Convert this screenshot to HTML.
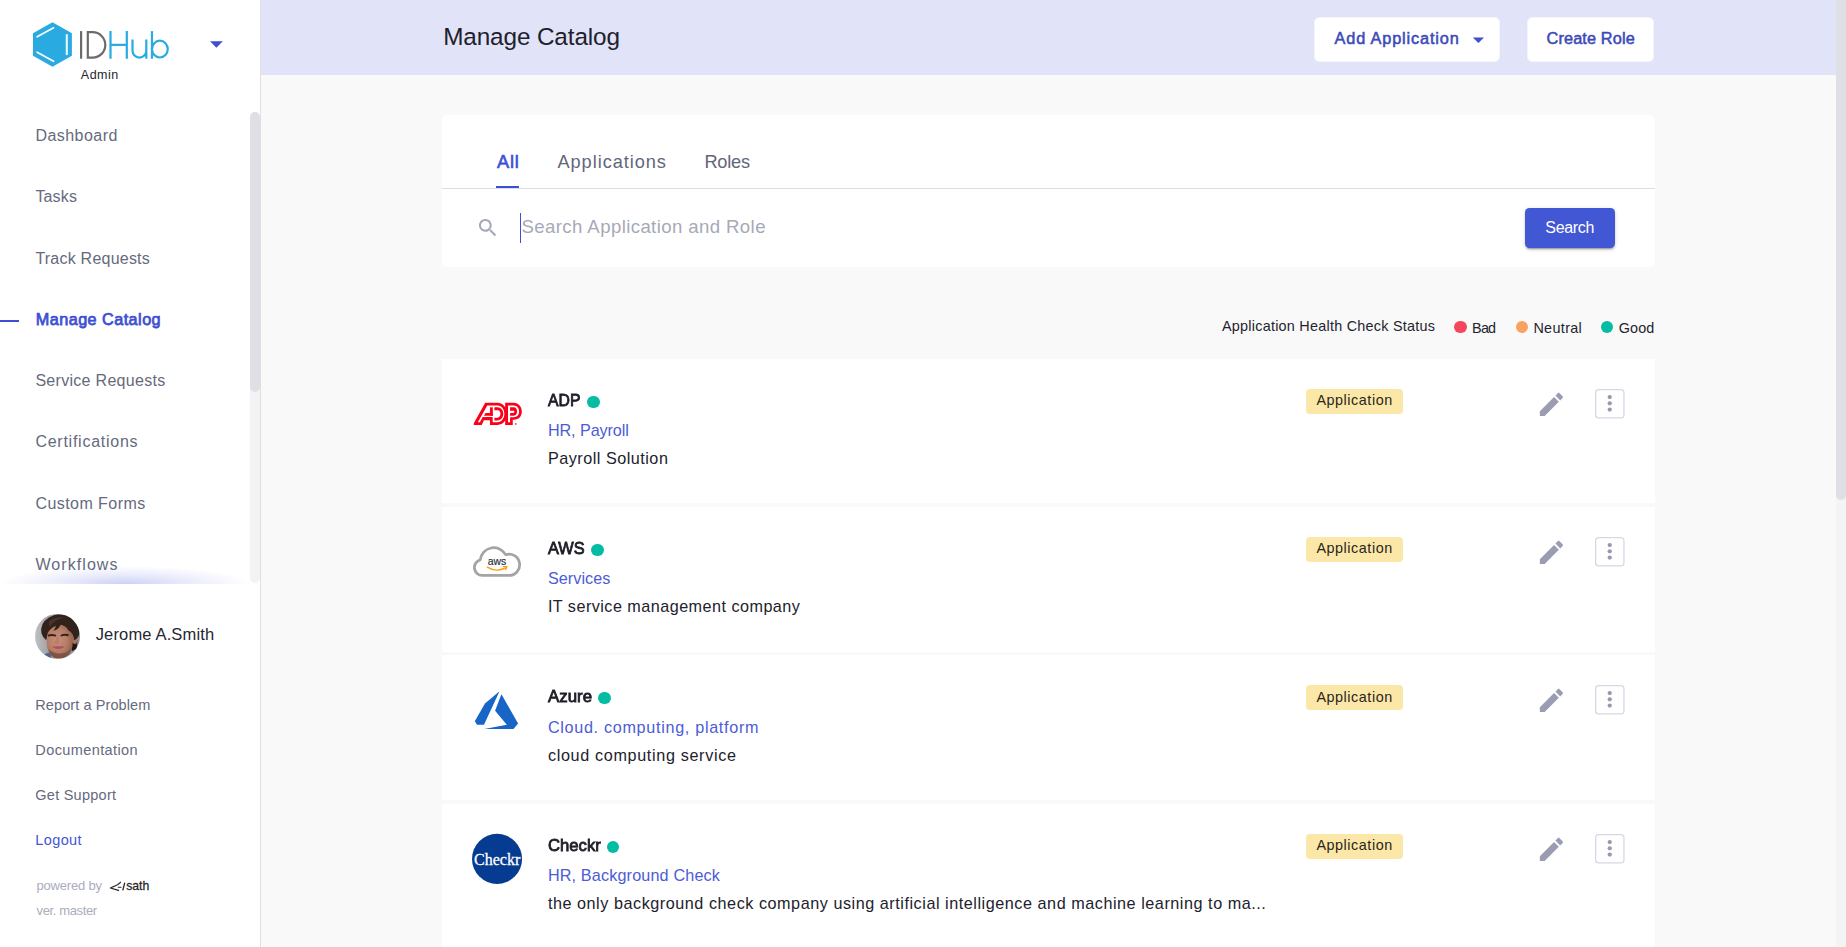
<!DOCTYPE html>
<html><head><meta charset="utf-8"><title>Manage Catalog</title>
<style>
html,body{margin:0;padding:0;overflow:hidden;}
body{width:1846px;height:947px;overflow:hidden;position:relative;background:#f9f9f9;font-family:"Liberation Sans",sans-serif;}
.a{position:absolute;}
.t{position:absolute;white-space:pre;}
#side{left:0;top:0;width:260px;height:947px;background:#fff;}
#sideborder{left:260px;top:0;width:1px;height:947px;background:#e0e0e2;}
#hdr{left:261px;top:0;width:1575px;height:75px;background:#e1e4f8;}
.btn{background:#fff;border:1px solid #f3f4fc;border-radius:5px;box-sizing:border-box;}
.card{background:#fff;}
.badge{background:#fbe8a9;border-radius:4px;width:97px;height:25px;left:1306px;}
.dot{width:12.4px;height:12.4px;border-radius:50%;}
.more{width:30px;height:30px;box-sizing:border-box;border:1.4px solid #d9dae6;border-radius:4px;left:1595px;background:#fff;}
.more i{position:absolute;left:11.4px;width:4.4px;height:4.4px;border-radius:50%;background:#9799b0;}
</style></head><body>

<!-- ===== sidebar ===== -->
<div id="side" class="a"></div>
<div id="sideborder" class="a"></div>
<!-- nav bottom glow -->
<div class="a" style="left:0;top:560px;width:250px;height:24px;overflow:hidden;">
  <div class="a" style="left:-5px;top:0;width:260px;height:48px;background:radial-gradient(ellipse 125px 18px at 50% 50%, rgba(120,130,230,0.37), rgba(120,130,230,0.16) 50%, rgba(120,130,230,0) 100%);"></div>
</div>
<!-- sidebar scrollbar -->
<div class="a" style="left:250px;top:112px;width:10px;height:471px;background:#f3f3f4;border-radius:5px;"></div>
<div class="a" style="left:250px;top:112px;width:10px;height:280px;background:#dfe0e6;border-radius:5px;"></div>
<!-- active marker -->
<div class="a" style="left:0;top:319.6px;width:19px;height:2.1px;background:#3d4fd3;"></div>
<!-- dropdown triangle -->
<svg class="a" style="left:209px;top:40px" width="15" height="9" viewBox="0 0 15 9"><path d="M1 1.2 L13.8 1.2 L7.4 7.8 Z" fill="#3f4fd0"/></svg>

<svg class="a" style="left:25px;top:15px" width="155" height="60" viewBox="25 15 155 60">
<polygon points="52.5,22.3 71.9,33.2 71.9,55.8 52.5,66.7 33.0,55.8 33.0,33.2" fill="#29abe2"/>
<g stroke="#fff" stroke-linecap="round" fill="none">
<line x1="37.1" y1="36.8" x2="53.6" y2="27.8" stroke-width="1.7"/>
<line x1="37.1" y1="52.2" x2="53.6" y2="61.3" stroke-width="1.7"/>
<line x1="66.8" y1="35.0" x2="66.8" y2="54.2" stroke-width="2.1" stroke-opacity="0.9"/>
</g>
<g fill="none" stroke-width="2.2" stroke="#6b6b6b">
<path d="M81.1 31.1V58.7"/>
<path d="M87.8 32.2H92.6A12.7 12.7 0 0 1 92.6 57.6H87.8Z"/>
</g>
<g fill="none" stroke-width="2.2" stroke="#29abe2">
<path d="M110.5 31.1V58.7M126.8 31.1V58.7M110.5 44.8H126.8"/>
<path d="M132.5 39.5V50.7a6.9 6.9 0 0 0 13.8 0V39.5M146.3 39.5V58.7"/>
<path d="M151.95 31.1V58.7"/><ellipse cx="159.85" cy="49.1" rx="7.9" ry="8.4"/>
</g></svg>
<svg class="a" style="left:30px;top:608px" width="56" height="56" viewBox="0 0 947 947">
<defs><clipPath id="avc"><circle cx="465" cy="480" r="380"/></clipPath>
<filter id="avb" x="-10%" y="-10%" width="120%" height="120%"><feGaussianBlur stdDeviation="9"/></filter>
<linearGradient id="avbg" x1="0" x2="1" y1="0" y2="0"><stop offset="0" stop-color="#c4c5c9"/><stop offset="0.3" stop-color="#a2a2a5"/><stop offset="1" stop-color="#8f8f92"/></linearGradient>
<radialGradient id="avsk" cx="0.42" cy="0.45" r="0.62"><stop offset="0" stop-color="#c9917b"/><stop offset="0.6" stop-color="#b57c66"/><stop offset="1" stop-color="#8e5b48"/></radialGradient></defs>
<g clip-path="url(#avc)"><g filter="url(#avb)">
<rect x="60" y="80" width="820" height="820" fill="url(#avbg)"/>
<path d="M225 790 L345 745 L370 900 L190 900Z" fill="#46678f"/>
<path d="M705 590 L800 540 L790 690 L705 730Z" fill="#1f1714"/>
<ellipse cx="758" cy="535" rx="40" ry="72" fill="#b0705a"/>
<path d="M275 420 Q280 300 500 290 Q700 300 725 430 L720 640 Q700 800 560 850 Q470 870 390 830 Q300 760 285 620 Z" fill="url(#avsk)"/>
<path d="M315 700 Q330 790 400 835 Q480 870 570 845 Q680 790 712 660 Q640 770 520 770 Q400 770 315 700Z" fill="#7d4f3f" opacity="0.85"/>
<path d="M195 430 Q160 260 320 160 Q470 70 640 125 Q830 200 835 430 Q815 520 745 545 Q740 420 650 375 Q600 300 520 285 Q480 370 400 385 Q430 330 440 300 Q340 340 300 420 Q285 480 275 545 Q215 500 195 430Z" fill="#30221d"/>
<path d="M330 210 Q450 130 600 170 Q500 170 420 230 Q360 270 330 330 Q310 270 330 210Z" fill="#4d392f" opacity="0.8"/>
<path d="M300 452 Q370 425 445 455 L440 482 Q370 462 305 482Z" fill="#33221c"/>
<path d="M515 455 Q580 425 655 445 L652 478 Q580 462 518 482Z" fill="#33221c"/>
<path d="M455 470 Q440 560 405 600 Q450 625 500 600 Q490 540 485 470Z" fill="#b87a64" opacity="0.8"/>
<path d="M375 652 Q470 640 580 650 Q560 685 470 692 Q400 688 375 652Z" fill="#a9535b"/>
</g></g></svg>
<svg class="a" style="left:100px;top:872px" width="60" height="28" viewBox="0 0 1846 861">
<g fill="none" stroke="#262626" stroke-linecap="round" stroke-linejoin="round">
<path d="M630 315 Q590 385 320 492 L570 568" stroke-width="40"/>
<path d="M560 470H650" stroke-width="32"/>
<path d="M758 340L705 548" stroke-width="40"/></g>
<text x="805" y="548" font-family="Liberation Sans, sans-serif" font-size="372" fill="#262626" stroke="#262626" stroke-width="8" textLength="710" lengthAdjust="spacingAndGlyphs">sath</text>
</svg>

<!-- ===== header ===== -->
<div id="hdr" class="a"></div>
<div class="a btn" style="left:1313.6px;top:16.6px;width:186.5px;height:45.6px;"></div>
<div class="a btn" style="left:1526.9px;top:16.6px;width:127.2px;height:45.6px;"></div>
<svg class="a" style="left:1472px;top:37px" width="13" height="7" viewBox="0 0 13 7"><path d="M0.8 0.5 L12 0.5 L6.4 6.1 Z" fill="#3f4fd0"/></svg>

<!-- ===== main scrollbar ===== -->
<div class="a" style="left:1836px;top:0;width:10px;height:947px;background:#f4f4f5;"></div>
<div class="a" style="left:1836px;top:-10px;width:10px;height:510px;background:#dfe0e6;border-radius:5px;"></div>

<!-- ===== tabs/search card ===== -->
<div class="a card" style="left:442px;top:115px;width:1213px;height:152px;border-radius:5px;"></div>
<div class="a" style="left:442px;top:188px;width:1213px;height:1.2px;background:#dcdde2;"></div>
<div class="a" style="left:496px;top:185.8px;width:23px;height:2.2px;background:#3d4fd3;"></div>
<svg class="a" style="left:476.2px;top:215.8px" width="23.6" height="23.6" viewBox="0 0 24 24"><path fill="#a4a8b8" d="M15.5 14h-.79l-.28-.27C15.41 12.59 16 11.11 16 9.5 16 5.91 13.09 3 9.5 3S3 5.91 3 9.5 5.91 16 9.5 16c1.61 0 3.09-.59 4.23-1.57l.27.28v.79l5 4.99L20.49 19l-4.99-5zm-6 0C7.01 14 5 11.99 5 9.5S7.01 5 9.5 5 14 7.01 14 9.5 11.99 14 9.5 14z"/></svg>
<div class="a" style="left:520px;top:213.2px;width:1.2px;height:29.6px;background:#3d4fd3;"></div>
<div class="a" style="left:1525px;top:207.8px;width:90px;height:40.2px;background:#4257d4;border-radius:4.5px;box-shadow:0 3px 1px -2px rgba(0,0,0,.2),0 2px 2px rgba(0,0,0,.14),0 1px 5px rgba(0,0,0,.12);"></div>

<!-- legend dots -->
<div class="a dot" style="left:1454.3px;top:320.7px;background:#f4475e;"></div>
<div class="a dot" style="left:1515.8px;top:320.7px;background:#f9a260;"></div>
<div class="a dot" style="left:1600.9px;top:320.7px;background:#04bca3;"></div>

<div class="a card" style="left:442px;top:359px;width:1213px;height:144px;"></div>
<div class="a badge" style="top:388.80px;"></div>
<div class="a" style="left:587.0px;top:395.80px;width:12.5px;height:12.5px;border-radius:50%;background:#04bca3;"></div>
<svg class="a" style="left:1535.95px;top:388.55px" width="30.8" height="30.8" viewBox="0 0 24 24"><path fill="#9a9db2" d="M3 17.25V21h3.75L17.81 9.94l-3.75-3.75L3 17.25zM20.71 7.04c.39-.39.39-1.02 0-1.41l-2.34-2.34c-.39-.39-1.02-.39-1.41 0l-1.83 1.83 3.75 3.75 1.83-1.83z"/></svg>
<svg class="a" style="left:1595.3px;top:389.20px" width="29.6" height="29.6" viewBox="0 0 29.6 29.6"><rect x="0.65" y="0.65" width="28.3" height="28.3" rx="3.2" fill="#fff" stroke="#d6d8e4" stroke-width="1.3"/><g fill="#9799b0"><circle cx="14.75" cy="8.05" r="2.15"/><circle cx="14.75" cy="14.3" r="2.15"/><circle cx="14.75" cy="20.6" r="2.15"/></g></svg>
<svg class="a" style="left:470px;top:398.00px" width="56" height="30" viewBox="0 0 1768 947">
<g fill="#fb0019">
<path d="M120 850 L120 800 L480 150 L870 150 C1050 150 1170 320 1170 500 C1170 690 1050 850 870 850 L630 850 L630 700 L440 700 L370 850 Z"/>
<path d="M1110 150 L1380 150 C1540 150 1635 290 1635 430 C1635 580 1540 690 1380 690 L1350 690 L1350 850 L1110 850 Z"/>
<circle cx="1447" cy="818" r="30" opacity="0.75"/>
</g>
<g fill="#fff">
<path d="M248 762 L545 235 L870 235 C1000 235 1085 360 1085 500 C1085 640 1000 765 870 765 L715 765 L715 600 L400 600 L312 762 Z"/>
<path d="M1200 235 L1380 235 C1490 235 1550 330 1550 430 C1550 530 1490 610 1380 610 L1265 610 L1265 762 L1200 762 Z"/>
</g>
<g fill="#fb0019">
<rect x="630" y="295" width="90" height="265"/>
<path d="M440 560 L490 470 L720 470 L720 560 Z"/>
<path d="M770 295 L870 295 C980 295 1050 390 1050 500 C1050 610 980 710 870 710 L770 710 L770 620 L870 620 C930 620 962 560 962 500 C962 440 930 385 870 385 L770 385 Z"/>
<path d="M1265 295 L1380 295 C1450 295 1487 360 1487 430 C1487 500 1450 560 1380 560 L1265 560 L1265 470 L1370 470 C1395 470 1402 452 1402 435 C1402 415 1395 400 1370 400 L1265 400 Z"/>
</g>
</svg>
<div class="a card" style="left:442px;top:507px;width:1213px;height:145px;"></div>
<div class="a badge" style="top:536.80px;"></div>
<div class="a" style="left:591.2px;top:543.80px;width:12.5px;height:12.5px;border-radius:50%;background:#04bca3;"></div>
<svg class="a" style="left:1535.95px;top:536.55px" width="30.8" height="30.8" viewBox="0 0 24 24"><path fill="#9a9db2" d="M3 17.25V21h3.75L17.81 9.94l-3.75-3.75L3 17.25zM20.71 7.04c.39-.39.39-1.02 0-1.41l-2.34-2.34c-.39-.39-1.02-.39-1.41 0l-1.83 1.83 3.75 3.75 1.83-1.83z"/></svg>
<svg class="a" style="left:1595.3px;top:537.20px" width="29.6" height="29.6" viewBox="0 0 29.6 29.6"><rect x="0.65" y="0.65" width="28.3" height="28.3" rx="3.2" fill="#fff" stroke="#d6d8e4" stroke-width="1.3"/><g fill="#9799b0"><circle cx="14.75" cy="8.05" r="2.15"/><circle cx="14.75" cy="14.3" r="2.15"/><circle cx="14.75" cy="20.6" r="2.15"/></g></svg>
<svg class="a" style="left:465px;top:535.00px" width="70" height="55" viewBox="0 0 1205 947">
<path d="M296 697 A137 137 0 0 1 262 428 A235 235 0 0 1 700 338 A184 184 0 1 1 757 697 Z" fill="#fff" stroke="#a4a4a4" stroke-width="48" stroke-linejoin="round"/>
<text x="392" y="513" font-family="Liberation Sans, sans-serif" font-size="190" font-weight="400" fill="#232f3e" stroke="#232f3e" stroke-width="3" textLength="318" lengthAdjust="spacingAndGlyphs">aws</text>
<path d="M385 553 Q540 650 695 568" fill="none" stroke="#ff9900" stroke-width="24" stroke-linecap="round"/>
<path d="M660 543 L722 545 L700 598" fill="none" stroke="#ff9900" stroke-width="20" stroke-linejoin="round" stroke-linecap="round"/>
</svg>
<div class="a card" style="left:442px;top:655px;width:1213px;height:145px;"></div>
<div class="a badge" style="top:684.80px;"></div>
<div class="a" style="left:598.2px;top:691.80px;width:12.5px;height:12.5px;border-radius:50%;background:#04bca3;"></div>
<svg class="a" style="left:1535.95px;top:684.55px" width="30.8" height="30.8" viewBox="0 0 24 24"><path fill="#9a9db2" d="M3 17.25V21h3.75L17.81 9.94l-3.75-3.75L3 17.25zM20.71 7.04c.39-.39.39-1.02 0-1.41l-2.34-2.34c-.39-.39-1.02-.39-1.41 0l-1.83 1.83 3.75 3.75 1.83-1.83z"/></svg>
<svg class="a" style="left:1595.3px;top:685.20px" width="29.6" height="29.6" viewBox="0 0 29.6 29.6"><rect x="0.65" y="0.65" width="28.3" height="28.3" rx="3.2" fill="#fff" stroke="#d6d8e4" stroke-width="1.3"/><g fill="#9799b0"><circle cx="14.75" cy="8.05" r="2.15"/><circle cx="14.75" cy="14.3" r="2.15"/><circle cx="14.75" cy="20.6" r="2.15"/></g></svg>
<svg class="a" style="left:465px;top:680.00px" width="70" height="60" viewBox="0 0 1105 947">
<g fill="#1765c6">
<path d="M545 178 L315 370 L155 650 L190 708 L300 708 Z"/>
<path d="M575 225 L475 485 L660 708 L305 775 L765 775 L838 685 Z"/>
</g></svg>
<div class="a card" style="left:442px;top:804px;width:1213px;height:143px;"></div>
<div class="a badge" style="top:833.80px;"></div>
<div class="a" style="left:606.8px;top:840.80px;width:12.5px;height:12.5px;border-radius:50%;background:#04bca3;"></div>
<svg class="a" style="left:1535.95px;top:833.55px" width="30.8" height="30.8" viewBox="0 0 24 24"><path fill="#9a9db2" d="M3 17.25V21h3.75L17.81 9.94l-3.75-3.75L3 17.25zM20.71 7.04c.39-.39.39-1.02 0-1.41l-2.34-2.34c-.39-.39-1.02-.39-1.41 0l-1.83 1.83 3.75 3.75 1.83-1.83z"/></svg>
<svg class="a" style="left:1595.3px;top:834.20px" width="29.6" height="29.6" viewBox="0 0 29.6 29.6"><rect x="0.65" y="0.65" width="28.3" height="28.3" rx="3.2" fill="#fff" stroke="#d6d8e4" stroke-width="1.3"/><g fill="#9799b0"><circle cx="14.75" cy="8.05" r="2.15"/><circle cx="14.75" cy="14.3" r="2.15"/><circle cx="14.75" cy="20.6" r="2.15"/></g></svg>
<svg class="a" style="left:465px;top:825.00px" width="70" height="70" viewBox="0 0 947 947">
<circle cx="433.5" cy="458.5" r="338.5" fill="#053b90"/>
<text x="122" y="540" font-family="Liberation Serif, serif" font-size="236" fill="#fff" stroke="#fff" stroke-width="4" textLength="626" lengthAdjust="spacingAndGlyphs">Checkr</text>
</svg>

<span class="t" style="left:35.40px;top:127px;font-size:16px;line-height:17px;font-weight:400;color:#656a7d;letter-spacing:0.465px;">Dashboard</span>
<span class="t" style="left:35.40px;top:188px;font-size:16px;line-height:17px;font-weight:400;color:#656a7d;letter-spacing:0.148px;">Tasks</span>
<span class="t" style="left:35.40px;top:250px;font-size:16px;line-height:17px;font-weight:400;color:#656a7d;letter-spacing:0.227px;">Track Requests</span>
<span class="t" style="left:35.80px;top:310px;font-size:16.2px;line-height:18px;font-weight:400;color:#3d4fd3;letter-spacing:0.462px;-webkit-text-stroke:0.75px #3d4fd3;">Manage Catalog</span>
<span class="t" style="left:35.40px;top:372px;font-size:16px;line-height:17px;font-weight:400;color:#656a7d;letter-spacing:0.294px;">Service Requests</span>
<span class="t" style="left:35.40px;top:433px;font-size:16px;line-height:17px;font-weight:400;color:#656a7d;letter-spacing:0.747px;">Certifications</span>
<span class="t" style="left:35.40px;top:495px;font-size:16px;line-height:17px;font-weight:400;color:#656a7d;letter-spacing:0.445px;">Custom Forms</span>
<span class="t" style="left:35.40px;top:556px;font-size:16px;line-height:17px;font-weight:400;color:#656a7d;letter-spacing:1.075px;">Workflows</span>
<span class="t" style="left:80.80px;top:68px;font-size:12.5px;line-height:14px;font-weight:400;color:#25252f;letter-spacing:0.516px;">Admin</span>
<span class="t" style="left:95.70px;top:625px;font-size:16.5px;line-height:18px;font-weight:400;color:#262633;letter-spacing:0.156px;">Jerome A.Smith</span>
<span class="t" style="left:35.30px;top:697px;font-size:14.5px;line-height:16px;font-weight:400;color:#656a7d;letter-spacing:0.091px;">Report a Problem</span>
<span class="t" style="left:35.30px;top:742px;font-size:14.5px;line-height:16px;font-weight:400;color:#656a7d;letter-spacing:0.397px;">Documentation</span>
<span class="t" style="left:35.30px;top:787px;font-size:14.5px;line-height:16px;font-weight:400;color:#656a7d;letter-spacing:0.251px;">Get Support</span>
<span class="t" style="left:35.30px;top:832px;font-size:14.5px;line-height:16px;font-weight:400;color:#4456d6;letter-spacing:0.388px;">Logout</span>
<span class="t" style="left:36.50px;top:878px;font-size:13px;line-height:15px;font-weight:400;color:#a9adbd;letter-spacing:-0.191px;">powered by</span>
<span class="t" style="left:36.50px;top:903px;font-size:13px;line-height:15px;font-weight:400;color:#a9adbd;letter-spacing:-0.370px;">ver. master</span>
<span class="t" style="left:443.20px;top:23px;font-size:24.3px;line-height:27px;font-weight:400;color:#21212d;letter-spacing:-0.116px;">Manage Catalog</span>
<span class="t" style="left:1334.50px;top:29px;font-size:16.3px;line-height:18px;font-weight:400;color:#3d4bb8;letter-spacing:0.861px;-webkit-text-stroke:0.55px #3d4bb8;">Add Application</span>
<span class="t" style="left:1546.50px;top:29px;font-size:16.3px;line-height:18px;font-weight:400;color:#3d4bb8;letter-spacing:0.131px;-webkit-text-stroke:0.55px #3d4bb8;">Create Role</span>
<span class="t" style="left:496.90px;top:152px;font-size:18.2px;line-height:20px;font-weight:400;color:#3d4fd3;letter-spacing:0.891px;-webkit-text-stroke:0.6px #3d4fd3;">All</span>
<span class="t" style="left:557.50px;top:152px;font-size:18.2px;line-height:20px;font-weight:400;color:#626679;letter-spacing:0.938px;">Applications</span>
<span class="t" style="left:704.40px;top:152px;font-size:18.2px;line-height:20px;font-weight:400;color:#626679;letter-spacing:-0.225px;">Roles</span>
<span class="t" style="left:521.50px;top:216px;font-size:18.6px;line-height:21px;font-weight:400;color:#a6a9b8;letter-spacing:0.399px;">Search Application and Role</span>
<span class="t" style="left:1545.30px;top:219px;font-size:16px;line-height:17px;font-weight:400;color:#ffffff;letter-spacing:-0.341px;">Search</span>
<span class="t" style="left:1222.00px;top:318px;font-size:14.4px;line-height:16px;font-weight:400;color:#24242e;letter-spacing:0.247px;">Application Health Check Status</span>
<span class="t" style="left:1472.10px;top:320px;font-size:14.4px;line-height:16px;font-weight:400;color:#24242e;letter-spacing:-0.805px;">Bad</span>
<span class="t" style="left:1533.40px;top:320px;font-size:14.4px;line-height:16px;font-weight:400;color:#24242e;letter-spacing:0.335px;">Neutral</span>
<span class="t" style="left:1618.70px;top:320px;font-size:14.4px;line-height:16px;font-weight:400;color:#24242e;letter-spacing:0.127px;">Good</span>
<span class="t" style="left:548.00px;top:390px;font-size:17.2px;line-height:20px;font-weight:400;color:#1d1d27;letter-spacing:0.000px;-webkit-text-stroke:0.85px #1d1d27;transform:scaleX(0.9167);transform-origin:0 0;">ADP</span>
<span class="t" style="left:547.90px;top:421px;font-size:16.2px;line-height:18px;font-weight:400;color:#4c5cd6;letter-spacing:-0.086px;">HR, Payroll</span>
<span class="t" style="left:547.90px;top:449px;font-size:16.2px;line-height:18px;font-weight:400;color:#22222c;letter-spacing:0.501px;">Payroll Solution</span>
<span class="t" style="left:1316.40px;top:392px;font-size:14.4px;line-height:16px;font-weight:400;color:#2a2518;letter-spacing:0.539px;">Application</span>
<span class="t" style="left:548.00px;top:538px;font-size:17.2px;line-height:20px;font-weight:400;color:#1d1d27;letter-spacing:0.000px;-webkit-text-stroke:0.85px #1d1d27;transform:scaleX(0.9503);transform-origin:0 0;">AWS</span>
<span class="t" style="left:547.90px;top:569px;font-size:16.2px;line-height:18px;font-weight:400;color:#4c5cd6;letter-spacing:0.060px;">Services</span>
<span class="t" style="left:547.90px;top:597px;font-size:16.2px;line-height:18px;font-weight:400;color:#22222c;letter-spacing:0.463px;">IT service management company</span>
<span class="t" style="left:1316.40px;top:540px;font-size:14.4px;line-height:16px;font-weight:400;color:#2a2518;letter-spacing:0.539px;">Application</span>
<span class="t" style="left:548.00px;top:686px;font-size:17.2px;line-height:20px;font-weight:400;color:#1d1d27;letter-spacing:0.000px;-webkit-text-stroke:0.85px #1d1d27;transform:scaleX(0.9798);transform-origin:0 0;">Azure</span>
<span class="t" style="left:547.90px;top:718px;font-size:16.2px;line-height:18px;font-weight:400;color:#4c5cd6;letter-spacing:0.686px;">Cloud. computing, platform</span>
<span class="t" style="left:547.90px;top:746px;font-size:16.2px;line-height:18px;font-weight:400;color:#22222c;letter-spacing:0.652px;">cloud computing service</span>
<span class="t" style="left:1316.40px;top:689px;font-size:14.4px;line-height:16px;font-weight:400;color:#2a2518;letter-spacing:0.539px;">Application</span>
<span class="t" style="left:548.00px;top:835px;font-size:17.2px;line-height:20px;font-weight:400;color:#1d1d27;letter-spacing:0.000px;-webkit-text-stroke:0.85px #1d1d27;transform:scaleX(0.9696);transform-origin:0 0;">Checkr</span>
<span class="t" style="left:547.90px;top:866px;font-size:16.2px;line-height:18px;font-weight:400;color:#4c5cd6;letter-spacing:0.150px;">HR, Background Check</span>
<span class="t" style="left:547.90px;top:894px;font-size:16.2px;line-height:18px;font-weight:400;color:#22222c;letter-spacing:0.537px;">the only background check company using artificial intelligence and machine learning to ma...</span>
<span class="t" style="left:1316.40px;top:837px;font-size:14.4px;line-height:16px;font-weight:400;color:#2a2518;letter-spacing:0.539px;">Application</span>
</body></html>
